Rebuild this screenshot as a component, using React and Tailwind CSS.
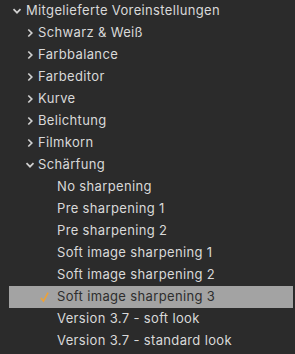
import React from "react";

const Chevron = ({ open, className }) => (
  <svg viewBox="0 0 10 10" className={className} fill="none">
    {open ? (
      <path d="M1.5 3.2 L5 6.7 L8.5 3.2" stroke="currentColor" strokeWidth="1.7" />
    ) : (
      <path d="M3.3 1.5 L6.8 5 L3.3 8.5" stroke="currentColor" strokeWidth="1.7" />
    )}
  </svg>
);

const groups = ["Schwarz & Weiß", "Farbbalance", "Farbeditor", "Kurve", "Belichtung", "Filmkorn"];

const presets = [
  "No sharpening",
  "Pre sharpening 1",
  "Pre sharpening 2",
  "Soft image sharpening 1",
  "Soft image sharpening 2",
  "Soft image sharpening 3",
  "Version 3.7 - soft look",
  "Version 3.7 - standard look",
];

const selected = "Soft image sharpening 3";

export default function App() {
  return (
    <div
      className="w-[295px] h-[354px] overflow-hidden bg-[#2b2b2b] text-[13px] tracking-[0.35px] text-[#d9d9d9]"
      style={{ fontFamily: "Inter, 'Noto Sans', sans-serif" }}
    >
      <div className="flex items-center h-[22px] pl-[12px]">
        <Chevron open className="w-[10px] h-[10px] mr-[4px] text-[#d0d0d0]" />
        <span>Mitgelieferte Voreinstellungen</span>
      </div>
      {groups.map((g) => (
        <div key={g} className="flex items-center h-[22px] pl-[25px]">
          <Chevron className="w-[10px] h-[10px] mr-[3px] text-[#d0d0d0]" />
          <span>{g}</span>
        </div>
      ))}
      <div className="flex items-center h-[22px] pl-[25px]">
        <Chevron open className="w-[10px] h-[10px] mr-[3px] text-[#d0d0d0]" />
        <span>Schärfung</span>
      </div>
      {presets.map((p) => {
        const isSel = p === selected;
        return (
          <div
            key={p}
            className={`flex items-center h-[22px] ml-[9px] mr-[2px] ${
              isSel ? "bg-[#a3a3a3] text-[#2e2e2e]" : ""
            }`}
          >
            <span className="w-[48px] flex justify-end pr-[8px]">
              {isSel && (
                <svg viewBox="0 0 10 12" className="w-[9px] h-[12px]" fill="none">
                  <path d="M1 7 L3.8 10.6 L9 1.2" stroke="#f0a232" strokeWidth="1.7" />
                </svg>
              )}
            </span>
            <span>{p}</span>
          </div>
        );
      })}
    </div>
  );
}
